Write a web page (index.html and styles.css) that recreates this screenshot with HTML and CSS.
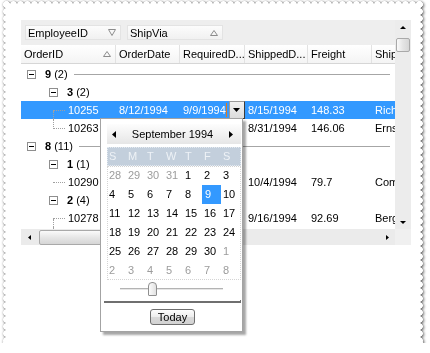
FILE: index.html
```html
<!DOCTYPE html>
<html lang="en">
<head>
    <meta charset="UTF-8">
    <title>Orders grid</title>
    <link rel="stylesheet" href="styles.css">
</head>
<body>
    <div class="paper">
        <div class="grid">
            <div class="main">
                <div class="groupbar">
                    <div class="chip">EmployeeID
                        <svg class="ico" width="8" height="7" viewBox="0 0 8 7"><polygon points="0.5,0.5 7.5,0.5 4,6.5"/></svg>
                    </div>
                    <div class="chip">ShipVia
                        <svg class="ico" width="8" height="6" viewBox="0 0 8 6"><polygon points="0.5,5.5 4,0.5 7.5,5.5"/></svg>
                    </div>
                </div>
                <div class="header">
                    <div class="hcell c1">OrderID
                        <svg class="ico" width="8" height="6" viewBox="0 0 8 6"><polygon points="0.5,5.5 4,0.5 7.5,5.5"/></svg>
                    </div>
                    <div class="hcell c2">OrderDate</div>
                    <div class="hcell c3">RequiredD...</div>
                    <div class="hcell c4">ShippedD...</div>
                    <div class="hcell c5">Freight</div>
                    <div class="hcell c6">ShipName</div>
                </div>
                <div class="body">
                    <div class="row group"><span class="box"></span><b>9</b>&nbsp;(2)<span class="rule"></span></div>
                    <div class="row group sub"><span class="box"></span><b>3</b>&nbsp;(2)</div>
                    <div class="row selected">
                        <div class="cell c1 leaf"><span class="twig first"><i></i><i></i></span>10255</div>
                        <div class="cell c2">8/12/1994</div>
                        <div class="cell c3 editing"><span class="edit">9/9/1994</span><span class="caret"></span><span class="dropbtn"><svg width="7" height="4" viewBox="0 0 7 4"><polygon points="0,0 7,0 3.5,4"/></svg></span></div>
                        <div class="cell c4">8/15/1994</div>
                        <div class="cell c5">148.33</div>
                        <div class="cell c6">Richter Supermarkt</div>
                    </div>
                    <div class="row">
                        <div class="cell c1 leaf"><span class="twig last"><i></i><i></i></span>10263</div>
                        <div class="cell c2">8/23/1994</div>
                        <div class="cell c3">9/20/1994</div>
                        <div class="cell c4">8/31/1994</div>
                        <div class="cell c5">146.06</div>
                        <div class="cell c6">Ernst Handel</div>
                    </div>
                    <div class="row group"><span class="box"></span><b>8</b>&nbsp;(11)<span class="rule"></span></div>
                    <div class="row group sub"><span class="box"></span><b>1</b>&nbsp;(1)</div>
                    <div class="row">
                        <div class="cell c1 leaf"><span class="twig"><i></i><i></i></span>10290</div>
                        <div class="cell c2">8/27/1994</div>
                        <div class="cell c3">9/24/1994</div>
                        <div class="cell c4">10/4/1994</div>
                        <div class="cell c5">79.7</div>
                        <div class="cell c6">Comércio Mineiro</div>
                    </div>
                    <div class="row group sub"><span class="box"></span><b>2</b>&nbsp;(4)</div>
                    <div class="row">
                        <div class="cell c1 leaf"><span class="twig first"><i></i><i></i></span>10278</div>
                        <div class="cell c2">8/12/1994</div>
                        <div class="cell c3">9/9/1994</div>
                        <div class="cell c4">9/16/1994</div>
                        <div class="cell c5">92.69</div>
                        <div class="cell c6">Berglunds snabbköp</div>
                    </div>
                    <div class="row">
                        <div class="cell c1 leaf"><span class="twig middle"><i></i><i></i></span>10280</div>
                        <div class="cell c2">8/14/1994</div>
                        <div class="cell c3">9/11/1994</div>
                        <div class="cell c4">9/12/1994</div>
                        <div class="cell c5">8.98</div>
                        <div class="cell c6">Berglunds snabbköp</div>
                    </div>
                </div>
                <div class="hscroll">
                    <span class="sbtn"><svg width="3" height="5" viewBox="0 0 3 5"><polygon points="3,0 3,5 0,2.5"/></svg></span>
                    <span class="hthumb"></span>
                    <span class="sbtn end"><svg width="3" height="5" viewBox="0 0 3 5"><polygon points="0,0 0,5 3,2.5"/></svg></span>
                </div>
            </div>
            <div class="side">
                <div class="vscroll">
                    <span class="vbtn"><svg width="6" height="3" viewBox="0 0 6 3"><polygon points="0,3 6,3 3,0"/></svg></span>
                    <span class="vthumb"></span>
                    <span class="vbtn end"><svg width="6" height="3" viewBox="0 0 6 3"><polygon points="0,0 6,0 3,3"/></svg></span>
                </div>
                <div class="corner"></div>
            </div>

            <div class="calendar">
                <div class="cal-nav">
                    <svg width="4" height="7" viewBox="0 0 4 7"><polygon points="4,0 4,7 0,3.5"/></svg>
                    <span>September 1994</span>
                    <svg width="4" height="7" viewBox="0 0 4 7"><polygon points="0,0 0,7 4,3.5"/></svg>
                </div>
                <div class="cal-days">
                    <span>S</span><span>M</span><span>T</span><span>W</span><span>T</span><span>F</span><span>S</span>
                </div>
                <div class="cal-dates">
                    <span class="dim">28</span><span class="dim">29</span><span class="dim">30</span><span class="dim">31</span><span>1</span><span>2</span><span>3</span>
                    <span>4</span><span>5</span><span>6</span><span>7</span><span>8</span><span class="sel">9</span><span>10</span>
                    <span>11</span><span>12</span><span>13</span><span>14</span><span>15</span><span>16</span><span>17</span>
                    <span>18</span><span>19</span><span>20</span><span>21</span><span>22</span><span>23</span><span>24</span>
                    <span>25</span><span>26</span><span>27</span><span>28</span><span>29</span><span>30</span><span class="dim">1</span>
                    <span class="dim">2</span><span class="dim">3</span><span class="dim">4</span><span class="dim">5</span><span class="dim">6</span><span class="dim">7</span><span class="dim">8</span>
                </div>
                <div class="slider"><span class="knob"></span></div>
                <div class="cal-sep"></div>
                <div class="cal-foot"><button class="today">Today</button></div>
            </div>
        </div>
    </div>
</body>
</html>
```

FILE: styles.css
```css
* {
    margin: 0;
    padding: 0;
    box-sizing: border-box;
}
body {
    background: #fff;
    font: 11px "Liberation Sans", Arial, sans-serif;
    color: #000;
}

/* scalloped sheet */
.paper {
    position: relative;
    width: 414px;
    height: 339px;
    margin: 4px 0 0 6px;
    padding: 16px 0 0 15px;
    background: #fff;
    filter: drop-shadow(1px 1px 1.5px rgba(0, 0, 0, .55)) drop-shadow(0 0 1px rgba(0, 0, 0, .2));
}
.paper:before {
    content: '';
    position: absolute;
    top: -3px;
    left: -3px;
    right: -3px;
    bottom: -3px;
    z-index: -1;
    background:
        radial-gradient(circle at 3.5px 3.5px, #fff 3px, rgba(255, 255, 255, 0) 3.6px) 0 0 / 7px 7px repeat-x,
        radial-gradient(circle at 3.5px 3.5px, #fff 3px, rgba(255, 255, 255, 0) 3.6px) 0 100% / 7px 7px repeat-x,
        radial-gradient(circle at 3.5px 3.5px, #fff 3px, rgba(255, 255, 255, 0) 3.6px) 0 0 / 7px 7px repeat-y,
        radial-gradient(circle at 3.5px 3.5px, #fff 3px, rgba(255, 255, 255, 0) 3.6px) 100% 0 / 7px 7px repeat-y;
}

.grid {
    position: relative;
    display: flex;
    width: 390px;
    height: 225px;
}
.main {
    width: 374px;
    display: flex;
    flex-direction: column;
    overflow: hidden;
}
.ico polygon {
    fill: none;
    stroke: #8c8c8c;
    stroke-width: 1;
}

/* group by bar */
.groupbar {
    height: 25px;
    flex: none;
    display: flex;
    align-items: center;
    gap: 6px;
    padding-left: 4px;
    background: #eeeeee;
}
.chip {
    width: 96px;
    height: 15px;
    display: flex;
    align-items: center;
    justify-content: space-between;
    padding: 0 4px 0 2px;
    background: linear-gradient(#fcfcfc, #f1f1f1);
    border: 1px solid #e3e3e3;
}

/* column headers */
.header {
    height: 19px;
    flex: none;
    display: flex;
    overflow: hidden;
    background: linear-gradient(#ffffff, #f4f4f4);
    border-bottom: 1px solid #d6d6d6;
}
.hcell {
    height: 18px;
    line-height: 18px;
    padding-left: 3px;
    border-right: 1px solid #e2e2e2;
    white-space: nowrap;
    overflow: hidden;
    flex: none;
}
.hcell.c1 {
    display: flex;
    align-items: center;
    justify-content: space-between;
    padding-right: 4px;
}
.c1 { width: 95px; }
.c2 { width: 64px; }
.c3 { width: 65px; }
.c4 { width: 63px; }
.c5 { width: 64px; }
.c6 { width: 60px; border-right: none; }

/* rows */
.body {
    flex: 1;
    overflow: hidden;
    padding-top: 1px;
    background: #fff;
}
.row {
    display: flex;
    align-items: center;
    height: 18px;
    white-space: nowrap;
    overflow: hidden;
}
.cell {
    flex: none;
    height: 18px;
    line-height: 18px;
    padding-left: 3px;
    overflow: hidden;
}
.row.selected {
    background: #3399ff;
    color: #fff;
}
.group {
    padding-left: 6px;
}
.group.sub {
    padding-left: 28px;
}
.box {
    flex: none;
    width: 9px;
    height: 9px;
    margin-right: 9px;
    border: 1px solid #8e8e8e;
    background: #fff;
    display: flex;
    align-items: center;
    justify-content: center;
}
.box:after {
    content: '';
    width: 5px;
    height: 1px;
    background: #000;
}
.rule {
    flex: 1;
    height: 1px;
    margin: 0 5px 0 6px;
    background: #a6a6a6;
}

/* tree connectors */
.leaf {
    display: flex;
    padding-left: 32px;
}
.twig {
    flex: none;
    width: 12px;
    height: 18px;
    margin-right: 3px;
    display: flex;
    flex-direction: column;
}
.twig i:first-child {
    height: 10px;
    border-bottom: 1px dotted #a0a0a0;
}
.twig i:last-child {
    flex: 1;
}
.twig.last i:first-child,
.twig.middle i:first-child {
    border-left: 1px dotted #a0a0a0;
}
.twig.first i:last-child,
.twig.middle i:last-child {
    border-left: 1px dotted #a0a0a0;
}

/* inline date editor */
.editing {
    display: flex;
    align-items: center;
}
.edit {
    line-height: 13px;
    background: #3399ff;
    color: #fff;
}
.caret {
    width: 1px;
    height: 14px;
    background: #e07a1f;
}
.dropbtn {
    width: 16px;
    height: 18px;
    margin-left: 2px;
    display: flex;
    align-items: center;
    justify-content: center;
    background: linear-gradient(#f2f2f2, #dcdcdc);
    border: 1px solid #3c3c3c;
    border-top-color: #9a9a9a;
    border-left-color: #9a9a9a;
}
.dropbtn polygon {
    fill: #000;
}

/* scroll bars */
.hscroll {
    height: 16px;
    flex: none;
    display: flex;
    align-items: center;
    background: #ebebeb;
}
.sbtn {
    width: 16px;
    height: 16px;
    display: flex;
    align-items: center;
    justify-content: center;
}
.sbtn.end {
    margin-left: auto;
}
.hscroll polygon,
.vscroll polygon {
    fill: #000;
}
.hthumb {
    width: 150px;
    height: 15px;
    margin-left: 2px;
    border: 1px solid #a9a9a9;
    border-radius: 2px;
    background: linear-gradient(#fafafa, #e6e6e6 50%, #d6d6d6);
}
.side {
    width: 16px;
    display: flex;
    flex-direction: column;
}
.vscroll {
    flex: 1;
    display: flex;
    flex-direction: column;
    align-items: center;
    background: #ececec;
}
.vbtn {
    width: 16px;
    height: 16px;
    display: flex;
    align-items: center;
    justify-content: center;
    padding-bottom: 1px;
}
.vbtn.end {
    margin-top: auto;
    padding-bottom: 0;
    padding-top: 2px;
}
.vthumb {
    width: 14px;
    height: 14px;
    margin-top: 2px;
    border: 1px solid #a9a9a9;
    border-radius: 2px;
    background: linear-gradient(90deg, #fafafa, #e4e4e4 50%, #d6d6d6);
}
.corner {
    height: 16px;
    background: #f0f0f0;
}

/* drop down calendar */
.calendar {
    position: absolute;
    left: 79px;
    top: 98px;
    width: 143px;
    height: 214px;
    padding: 5px 1px 0 6px;
    background: #fff;
    border: 1px solid #a3a3a3;
    box-shadow: 3px 3px 2px rgba(0, 0, 0, .35);
}
.cal-nav {
    height: 20px;
    display: flex;
    align-items: center;
    justify-content: space-between;
    padding: 0 8px 0 5px;
    background: linear-gradient(#fdfdfd, #e6e6e6);
    font-size: 11px;
}
.cal-nav polygon {
    fill: #000;
}
.cal-days,
.cal-dates {
    display: grid;
    grid-template-columns: repeat(7, 19px);
    grid-auto-rows: 19px;
}
.cal-days {
    margin-top: 3px;
    background: #c3cfdc;
    color: #eef2f6;
    outline: 1px dotted #e4eaf0;
    outline-offset: -1px;
}
.cal-days span,
.cal-dates span {
    padding-left: 2px;
    line-height: 19px;
}
.cal-dates {
    outline: 1px dotted #d4d4d4;
    outline-offset: -1px;
}
.cal-dates .dim {
    color: #9c9c9c;
}
.cal-dates .sel {
    background: #3399ff;
    color: #fff;
    padding-left: 3px;
}
.slider {
    height: 16px;
    margin-top: 1px;
    display: flex;
    align-items: center;
    background: linear-gradient(#b3b3b3 1px, #e6e6e6 1px) no-repeat 13px 7px / 103px 2px;
}
.knob {
    width: 9px;
    height: 14px;
    margin-left: 41px;
    border: 1px solid #8f8f8f;
    border-radius: 4px 4px 1px 1px;
    background: linear-gradient(90deg, #fbfbfb, #e2e2e2);
}
.cal-sep {
    height: 3px;
    margin: 3px 0 0 -3px;
    border-bottom: 2px solid #6f6f6f;
    border-right: 1px solid #6f6f6f;
}
.cal-foot {
    display: flex;
    justify-content: center;
    padding-right: 3px;
    margin-top: 6px;
}
.today {
    width: 45px;
    height: 16px;
    font: 11px "Liberation Sans", Arial, sans-serif;
    color: #000;
    border: 1px solid #6e6e6e;
    border-radius: 3px;
    background: linear-gradient(#fdfdfd, #ececec 50%, #d9d9d9 51%, #d2d2d2);
}
```
